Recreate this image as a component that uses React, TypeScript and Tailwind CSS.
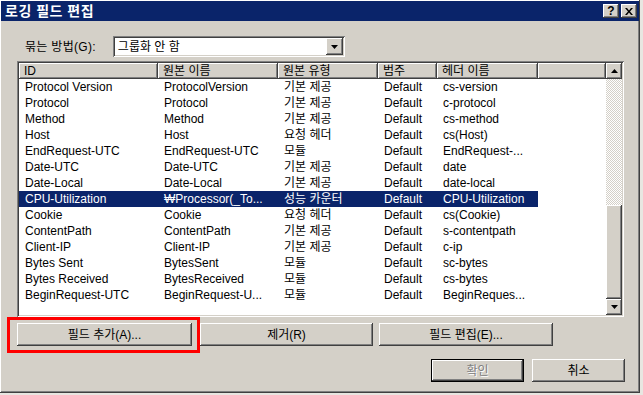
import React from "react";

const font = "font-['Liberation_Sans','Noto_Sans_CJK_KR',sans-serif]";
const raised =
  "shadow-[inset_-1px_-1px_#404040,inset_1px_1px_#ffffff,inset_-2px_-2px_#808080,inset_2px_2px_#d4d0c8]";
const sunken =
  "shadow-[inset_1px_1px_#808080,inset_-1px_-1px_#ffffff,inset_2px_2px_#404040,inset_-2px_-2px_#d4d0c8]";

const COLS = [
  { label: "ID", w: "w-[139px]" },
  { label: "원본 이름", w: "w-[120px]" },
  { label: "원본 유형", w: "w-[100px]" },
  { label: "범주", w: "w-[59px]" },
  { label: "헤더 이름", w: "w-[101px]" },
];

const ROWS = [
  ["Protocol Version", "ProtocolVersion", "기본 제공", "Default", "cs-version"],
  ["Protocol", "Protocol", "기본 제공", "Default", "c-protocol"],
  ["Method", "Method", "기본 제공", "Default", "cs-method"],
  ["Host", "Host", "요청 헤더", "Default", "cs(Host)"],
  ["EndRequest-UTC", "EndRequest-UTC", "모듈", "Default", "EndRequest-..."],
  ["Date-UTC", "Date-UTC", "기본 제공", "Default", "date"],
  ["Date-Local", "Date-Local", "기본 제공", "Default", "date-local"],
  ["CPU-Utilization", "₩Processor(_To...", "성능 카운터", "Default", "CPU-Utilization"],
  ["Cookie", "Cookie", "요청 헤더", "Default", "cs(Cookie)"],
  ["ContentPath", "ContentPath", "기본 제공", "Default", "s-contentpath"],
  ["Client-IP", "Client-IP", "기본 제공", "Default", "c-ip"],
  ["Bytes Sent", "BytesSent", "모듈", "Default", "sc-bytes"],
  ["Bytes Received", "BytesReceived", "모듈", "Default", "cs-bytes"],
  ["BeginRequest-UTC", "BeginRequest-U...", "모듈", "Default", "BeginReques..."],
];

const SELECTED = 7;

function Arrow({ down }: { down?: boolean }) {
  return (
    <svg width="7" height="4" viewBox="0 0 7 4">
      <path d={down ? "M0 0h7L3.5 4z" : "M0 4h7L3.5 0z"} fill="#000" />
    </svg>
  );
}

function ScrollButton({ down }: { down?: boolean }) {
  return (
    <div className={`w-[16px] h-[16px] bg-[#d4d0c8] ${raised} flex items-center justify-center`}>
      <Arrow down={down} />
    </div>
  );
}

function Btn({ children, className = "" }: { children: React.ReactNode; className?: string }) {
  return (
    <div className={`h-[23px] bg-[#d4d0c8] ${raised} flex items-center justify-center text-[12px] text-black ${className}`}>
      {children}
    </div>
  );
}

export default function App() {
  return (
    <div className={`w-[643px] h-[395px] bg-[#e8e6e1] overflow-hidden ${font}`}>
      <div className="w-[640px] h-[393px] bg-[#d4d0c8] shadow-[inset_-1px_-1px_#404040,inset_1px_1px_#ffffff,inset_-2px_-2px_#808080] pt-[1px] px-[1px] flex flex-col">
        {/* Title bar */}
        <div className="h-[20px] bg-[#0a246a] flex items-center pl-[4px] pr-[2px]">
          <span className="text-white font-bold text-[14px] tracking-[0.5px]">로깅 필드 편집</span>
          <div className="ml-auto flex gap-[2px]">
            <div className={`w-[16px] h-[14px] bg-[#d4d0c8] ${raised} flex items-center justify-center text-[12px] font-bold leading-none text-black`}>
              ?
            </div>
            <div className={`w-[16px] h-[14px] bg-[#d4d0c8] ${raised} flex items-center justify-center`}>
              <svg width="8" height="7" viewBox="0 0 8 7">
                <path d="M0 0h2l2 2.5L6 0h2L5 3.5 8 7H6L4 4.5 2 7H0l3-3.5z" fill="#000" />
              </svg>
            </div>
          </div>
        </div>

        {/* Group by row */}
        <div className="flex items-center mt-[15px] h-[21px]">
          <span className="ml-[24px] text-[12px] tracking-[0.3px] text-black">묶는 방법(G):</span>
          <div className={`ml-[17px] w-[232px] h-[21px] bg-white ${sunken} flex items-center p-[2px]`}>
            <span className="pl-[3px] text-[12px] text-black flex-1">그룹화 안 함</span>
            <div className={`w-[17px] h-[17px] bg-[#d4d0c8] ${raised} flex items-center justify-center`}>
              <Arrow down />
            </div>
          </div>
        </div>

        {/* List view */}
        <div className={`ml-[16px] mt-[4px] w-[607px] h-[256px] bg-white ${sunken} p-[2px] flex`}>
          <div className="flex-1 flex flex-col">
            <div className="flex h-[16px] bg-[#d4d0c8]">
              {COLS.map((c) => (
                <div key={c.label} className={`${c.w} ${raised} h-full flex items-center pl-[5px] text-[12px] text-black`}>
                  {c.label}
                </div>
              ))}
              <div className={`flex-1 ${raised} h-full`} />
            </div>
            {ROWS.map((r, i) => {
              const sel = i === SELECTED;
              return (
                <div key={i} className={`flex h-[16px] w-[519px] text-[12px] ${sel ? "bg-[#0a246a] text-white" : "text-black"}`}>
                  {r.map((cell, j) => (
                    <div key={j} className={`${COLS[j].w} pl-[6px] flex items-center whitespace-nowrap overflow-hidden`}>
                      {cell}
                    </div>
                  ))}
                </div>
              );
            })}
          </div>
          <div className="w-[16px] flex flex-col">
            <ScrollButton />
            <div className="flex-1 bg-[repeating-conic-gradient(#d4d0c8_0_25%,#ffffff_0_50%)] bg-[length:2px_2px]" />
            <div className={`h-[94px] bg-[#d4d0c8] ${raised}`} />
            <ScrollButton down />
          </div>
        </div>

        {/* Field buttons */}
        <div className="flex mt-[6px]">
          <div className="relative ml-[16px] w-[175px]">
            <Btn>필드 추가(A)...</Btn>
            <div className="absolute left-[-10px] top-[-6px] right-[-8px] bottom-[-7px] border-[3px] border-[#ff0000] pointer-events-none" />
          </div>
          <Btn className="ml-[8px] w-[173px]">제거(R)</Btn>
          <Btn className="ml-[6px] w-[174px]">필드 편집(E)...</Btn>
        </div>

        {/* OK / Cancel */}
        <div className="flex mt-[13px] ml-[430px]">
          <div className="w-[93px] h-[23px] border border-black bg-[#d4d0c8]">
            <div className={`h-full ${raised} flex items-center justify-center text-[12px] text-[#808080] [text-shadow:1px_1px_#ffffff]`}>
              확인
            </div>
          </div>
          <Btn className="ml-[8px] w-[93px]">취소</Btn>
        </div>
      </div>
    </div>
  );
}
